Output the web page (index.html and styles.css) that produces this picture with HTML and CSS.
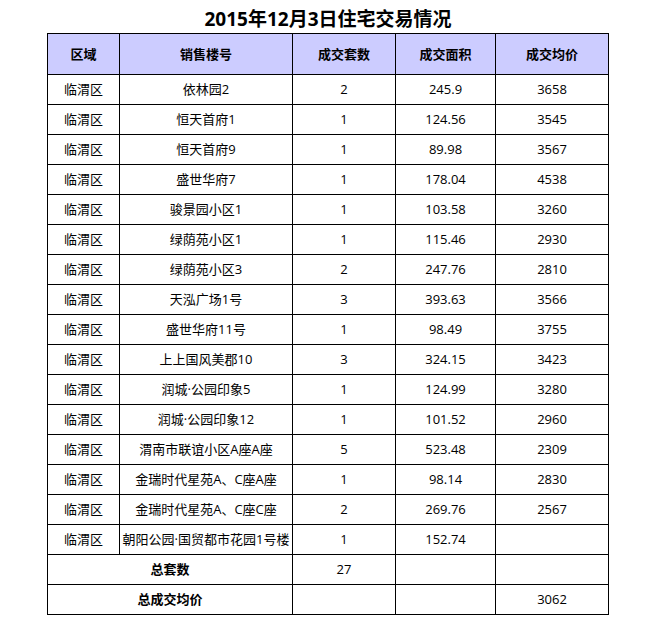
FILE: index.html
```html
<!DOCTYPE html>
<html lang="zh-CN">
<head>
<meta charset="utf-8">
<title>2015年12月3日住宅交易情况</title>
<link rel="stylesheet" href="styles.css">
</head>
<body>
<div class="page">
  <h1 class="title">2015年12月3日住宅交易情况</h1>
  <div class="grid">
    <div class="cell head">区域</div>
    <div class="cell head">销售楼号</div>
    <div class="cell head">成交套数</div>
    <div class="cell head">成交面积</div>
    <div class="cell head">成交均价</div>

    <div class="cell">临渭区</div><div class="cell">依林园2</div><div class="cell">2</div><div class="cell">245.9</div><div class="cell">3658</div>
    <div class="cell">临渭区</div><div class="cell">恒天首府1</div><div class="cell">1</div><div class="cell">124.56</div><div class="cell">3545</div>
    <div class="cell">临渭区</div><div class="cell">恒天首府9</div><div class="cell">1</div><div class="cell">89.98</div><div class="cell">3567</div>
    <div class="cell">临渭区</div><div class="cell">盛世华府7</div><div class="cell">1</div><div class="cell">178.04</div><div class="cell">4538</div>
    <div class="cell">临渭区</div><div class="cell">骏景园小区1</div><div class="cell">1</div><div class="cell">103.58</div><div class="cell">3260</div>
    <div class="cell">临渭区</div><div class="cell">绿荫苑小区1</div><div class="cell">1</div><div class="cell">115.46</div><div class="cell">2930</div>
    <div class="cell">临渭区</div><div class="cell">绿荫苑小区3</div><div class="cell">2</div><div class="cell">247.76</div><div class="cell">2810</div>
    <div class="cell">临渭区</div><div class="cell">天泓广场1号</div><div class="cell">3</div><div class="cell">393.63</div><div class="cell">3566</div>
    <div class="cell">临渭区</div><div class="cell">盛世华府11号</div><div class="cell">1</div><div class="cell">98.49</div><div class="cell">3755</div>
    <div class="cell">临渭区</div><div class="cell">上上国风美郡10</div><div class="cell">3</div><div class="cell">324.15</div><div class="cell">3423</div>
    <div class="cell">临渭区</div><div class="cell">润城·公园印象5</div><div class="cell">1</div><div class="cell">124.99</div><div class="cell">3280</div>
    <div class="cell">临渭区</div><div class="cell">润城·公园印象12</div><div class="cell">1</div><div class="cell">101.52</div><div class="cell">2960</div>
    <div class="cell">临渭区</div><div class="cell">渭南市联谊小区A座A座</div><div class="cell">5</div><div class="cell">523.48</div><div class="cell">2309</div>
    <div class="cell">临渭区</div><div class="cell">金瑞时代星苑A、C座A座</div><div class="cell">1</div><div class="cell">98.14</div><div class="cell">2830</div>
    <div class="cell">临渭区</div><div class="cell">金瑞时代星苑A、C座C座</div><div class="cell">2</div><div class="cell">269.76</div><div class="cell">2567</div>
    <div class="cell">临渭区</div><div class="cell">朝阳公园·国贸都市花园1号楼</div><div class="cell">1</div><div class="cell">152.74</div><div class="cell"></div>

    <div class="cell span2 bold">总套数</div><div class="cell">27</div><div class="cell"></div><div class="cell"></div>
    <div class="cell span2 bold">总成交均价</div><div class="cell"></div><div class="cell"></div><div class="cell">3062</div>
  </div>
</div>
</body>
</html>
```

FILE: styles.css
```css
html, body {
  margin: 0;
  padding: 0;
  background: #ffffff;
}

body {
  font-family: "Open Sans", "Noto Sans CJK SC", sans-serif;
  color: #000000;
}

.page {
  width: 562px;
  margin: 0 auto;
}

.title {
  margin: 0;
  padding-top: 5px;
  height: 28px;
  line-height: 28px;
  font-size: 19px;
  font-weight: 700;
  text-align: center;
  white-space: nowrap;
}

.grid {
  display: grid;
  grid-template-columns: 71px 172px 102px 99px 112px;
  grid-template-rows: 40px;
  grid-auto-rows: 29px;
  gap: 1px;
  padding: 1px;
  background: #000000;
}

.cell {
  background: #ffffff;
  display: flex;
  align-items: center;
  justify-content: center;
  padding-bottom: 2px;
  box-sizing: border-box;
  font-size: 13px;
  white-space: nowrap;
  overflow: hidden;
}

.head {
  background: #ccccff;
  font-weight: 700;
}

.span2 {
  grid-column: span 2;
}

.bold {
  font-weight: 700;
}
```
